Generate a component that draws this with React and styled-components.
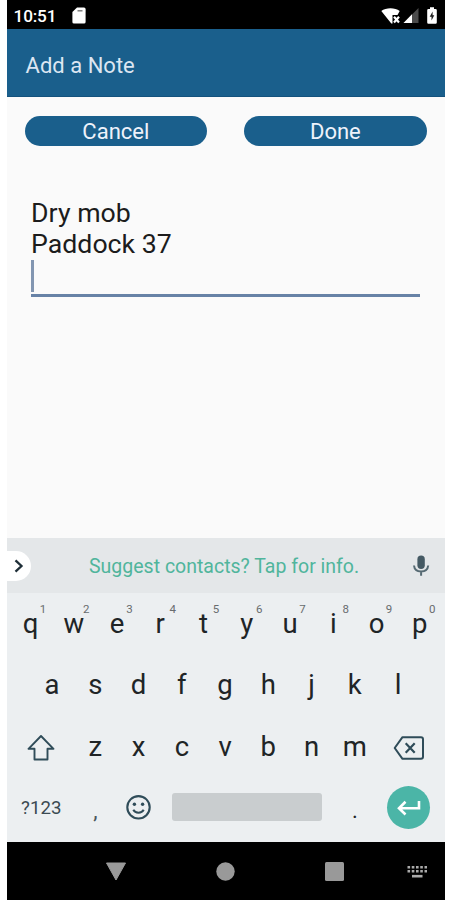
import React from 'react';
import styled, { createGlobalStyle } from 'styled-components';

const topRow = 'qwertyuiop'.split('');
const middleRow = 'asdfghjkl'.split('');
const bottomRow = 'zxcvbnm'.split('');

const App = () => {
  return (
    <>
      <GlobalStyle />
      <Phone>
        <StatusBar>
          <Clock>10:51</Clock>
          <SdCardIcon />
          <StatusIcons>
            <WifiIcon />
            <SignalIcon />
            <BatteryIcon />
          </StatusIcons>
        </StatusBar>
        <TitleBar>Add a Note</TitleBar>
        <Content>
          <Actions>
            <ActionButton>Cancel</ActionButton>
            <ActionButton>Done</ActionButton>
          </Actions>
          <NoteField>
            <NoteLine>Dry mob</NoteLine>
            <NoteLine>Paddock 37</NoteLine>
            <Caret />
          </NoteField>
        </Content>
        <Keyboard>
          <SuggestionBar>
            <ExpandButton><ChevronIcon /></ExpandButton>
            <Suggestion>Suggest contacts? Tap for info.</Suggestion>
            <MicIcon />
          </SuggestionBar>
          <KeyRow>
            {topRow.map((letter, i) => (
              <Key key={letter}>
                {letter}
                <Hint>{(i + 1) % 10}</Hint>
              </Key>
            ))}
          </KeyRow>
          <KeyRow>
            {middleRow.map((letter) => <Key key={letter}>{letter}</Key>)}
          </KeyRow>
          <KeyRow>
            <IconKey><ShiftIcon /></IconKey>
            {bottomRow.map((letter) => <Key key={letter}>{letter}</Key>)}
            <IconKey><DeleteIcon /></IconKey>
          </KeyRow>
          <KeyRow>
            <WideKey>?123</WideKey>
            <PunctuationKey $color="#4b575d">,</PunctuationKey>
            <Key><SmileyIcon /></Key>
            <SpaceSlot><SpaceBar /></SpaceSlot>
            <PunctuationKey $color="#202426">.</PunctuationKey>
            <WideKey><EnterKey><EnterIcon /></EnterKey></WideKey>
          </KeyRow>
        </Keyboard>
        <NavBar>
          <NavSlot />
          <NavSlot><BackIcon /></NavSlot>
          <NavSlot><HomeIcon /></NavSlot>
          <NavSlot><RecentsIcon /></NavSlot>
          <NavSlot><KeyboardIcon /></NavSlot>
        </NavBar>
      </Phone>
    </>
  )
}

export default App;

const SdCardIcon = () => (
  <svg width="14" height="17" viewBox="0 0 14 17">
    <path d="M5 0.5H12a1.6 1.6 0 0 1 1.6 1.6V15a1.6 1.6 0 0 1-1.6 1.6H2A1.6 1.6 0 0 1 0.4 15V5z" fill="#fff" />
    <path d="M5.5 3.8h5" stroke="#777" strokeWidth="1.4" />
  </svg>
)

const WifiIcon = () => (
  <svg width="19" height="16" viewBox="0 0 19 16">
    <path d="M0.3 3C5-0.8 14-0.8 18.7 3L16.5 7H11.5V15.5H10.3z" fill="#fff" />
    <path d="M13 8.8l5 5.7M18 8.8l-5 5.7" stroke="#fff" strokeWidth="2.2" />
  </svg>
)

const SignalIcon = () => (
  <svg width="16" height="15" viewBox="0 0 16 15">
    <path d="M15.5 0V15H0.5z" fill="#4b4b4b" />
    <path d="M9 6.3V15H0.5z" fill="#fff" />
  </svg>
)

const BatteryIcon = () => (
  <svg width="10" height="17" viewBox="0 0 10 17">
    <path d="M3 0.3h4V2h1.5a1.3 1.3 0 0 1 1.3 1.3V15.5a1.2 1.2 0 0 1-1.2 1.2H1.4A1.2 1.2 0 0 1 0.2 15.5V3.3A1.3 1.3 0 0 1 1.5 2H3z" fill="#fff" />
    <path d="M5.6 4.5L2.7 9.7h1.8v3.8L7.3 8.3H5.6z" fill="#222" />
  </svg>
)

const ChevronIcon = () => (
  <svg width="10" height="14" viewBox="0 0 10 14" fill="none">
    <path d="M1.5 1.3L7.5 7l-6 5.7" stroke="#1f2f38" strokeWidth="2.3" />
  </svg>
)

const MicIcon = () => (
  <svg width="18" height="22" viewBox="0 0 18 22" fill="none">
    <rect x="5.4" y="0.6" width="7.4" height="13.4" rx="3.7" fill="#455a64" />
    <path d="M2 10.5c0.4 4 3.3 6 7.1 6s6.7-2 7.1-6M9.1 16.5v4.3" stroke="#566a73" strokeWidth="2" />
  </svg>
)

const ShiftIcon = () => (
  <svg width="28" height="26" viewBox="0 0 28 26" fill="none">
    <path d="M14 1L1.5 13.8H7.5V24.5H20.5V13.8H26.5z" stroke="#2f4c59" strokeWidth="1.9" strokeLinejoin="round" />
  </svg>
)

const DeleteIcon = () => (
  <svg width="31" height="24" viewBox="0 0 31 24" fill="none">
    <path d="M9.5 1.2H28a2 2 0 0 1 2 2V20.8a2 2 0 0 1-2 2H9.5L1.7 12z" stroke="#2f4c59" strokeWidth="2" strokeLinejoin="round" />
    <path d="M12.7 7.3l9 9.4M21.7 7.3l-9 9.4" stroke="#2f4c59" strokeWidth="2.2" />
  </svg>
)

const SmileyIcon = () => (
  <svg width="26" height="26" viewBox="0 0 26 26" fill="none">
    <circle cx="12.5" cy="12.3" r="11.2" stroke="#2f4c59" strokeWidth="2.1" />
    <circle cx="8.4" cy="9.3" r="1.7" fill="#2f4c59" />
    <circle cx="16.6" cy="9.3" r="1.7" fill="#2f4c59" />
    <path d="M7.3 14.8c2 3.9 8.4 3.9 10.4 0" stroke="#2f4c59" strokeWidth="2" />
  </svg>
)

const EnterIcon = () => (
  <svg width="24" height="16" viewBox="0 0 24 16" fill="none">
    <path d="M22 1V8.2H2.5M8.5 1.8L2 8.2l6.5 6.3" stroke="#fff" strokeWidth="2.6" />
  </svg>
)

const BackIcon = () => (
  <svg width="22" height="19" viewBox="0 0 22 19">
    <path d="M1.5 1H20.5L11 18z" fill="#999" stroke="#999" strokeLinejoin="round" />
  </svg>
)

const HomeIcon = () => (
  <svg width="19" height="19" viewBox="0 0 19 19">
    <circle cx="9.5" cy="9.5" r="9.2" fill="#999" />
  </svg>
)

const RecentsIcon = () => (
  <svg width="19" height="19" viewBox="0 0 19 19">
    <rect width="19" height="19" rx="1.5" fill="#999" />
  </svg>
)

const KeyboardIcon = () => (
  <svg width="20" height="13" viewBox="0 0 20 13" fill="none" stroke="#aaa">
    <path d="M0.5 2.2H20M0.5 6.3H20" strokeWidth="2.6" strokeDasharray="2.6 1.65" />
    <path d="M5 11.2H15.5" strokeWidth="2.6" />
  </svg>
)

const GlobalStyle = createGlobalStyle`
  body {
    margin: 0;
    background: #fff;
    font-family: Roboto, sans-serif;
  }

  svg {
    display: block;
    flex: none;
  }
`;

const Phone = styled.div`
  width: 438px;
  height: 900px;
  margin-left: 6.6px;
  display: flex;
  flex-direction: column;
  overflow: hidden;
`;

const StatusBar = styled.div`
  height: 29px;
  box-sizing: border-box;
  display: flex;
  align-items: center;
  padding: 2px 8px 0 7px;
  background: #000;
`;

const Clock = styled.div`
  width: 58.5px;
  color: #fff;
  font-size: 17.2px;
  font-weight: 500;
  letter-spacing: -0.2px;
`;

const StatusIcons = styled.div`
  margin-left: auto;
  display: flex;
  align-items: center;
  gap: 3px;

  & > :last-child {
    margin-left: 5px;
  }
`;

const TitleBar = styled.div`
  height: 68px;
  box-sizing: border-box;
  padding: 5px 0 0 19px;
  display: flex;
  align-items: center;
  background: #1a5f8c;
  border-bottom: 1px solid #14527d;
  color: #dce6f2;
  font-size: 22px;
`;

const Content = styled.div`
  height: 441px;
  box-sizing: border-box;
  padding: 19px 18px 0;
  background: #fafafa;
`;

const Actions = styled.div`
  display: flex;
  justify-content: space-between;
`;

const ActionButton = styled.button`
  width: 182.5px;
  height: 29.5px;
  padding: 1px 0 0;
  border: 0;
  border-radius: 15px;
  background: #1a5f8c;
  color: #eef2fb;
  font: 400 22px Roboto, sans-serif;
`;

const NoteField = styled.div`
  margin: 52px 7px 0 6px;
  border-bottom: 3px solid #6782a6;
  color: #1c1c1c;
`;

const NoteLine = styled.div`
  height: 31px;
  padding-left: 0.5px;
  line-height: 31px;
  font-size: 26.7px;
`;

const Caret = styled.div`
  width: 3px;
  height: 32px;
  margin-bottom: 2px;
  background: #8296b1;
`;

const Keyboard = styled.div`
  height: 304px;
  background: #eceff1;
`;

const SuggestionBar = styled.div`
  height: 55px;
  display: flex;
  align-items: center;
  background: #e4e7e9;
`;

const ExpandButton = styled.div`
  width: 24px;
  height: 30px;
  box-sizing: border-box;
  display: flex;
  align-items: center;
  padding-left: 7px;
  border-radius: 0 15px 15px 0;
  background: #fff;
`;

const Suggestion = styled.div`
  width: 381px;
  box-sizing: border-box;
  padding: 2px 0 0 6px;
  color: #50b59c;
  font-size: 19.5px;
  text-align: center;
`;

const KeyRow = styled.div`
  height: 61.3px;
  display: flex;
  justify-content: center;
  padding-right: 1px;
`;

const Key = styled.div`
  position: relative;
  width: 43.25px;
  display: flex;
  align-items: center;
  justify-content: center;
  color: #202426;
  font-size: 27.5px;
`;

const WideKey = styled(Key)`
  width: 65px;
  color: #3b4a52;
  font-size: 18.7px;
`;

const IconKey = styled(WideKey)`
  box-sizing: border-box;
  padding-top: 3px;
`;

const PunctuationKey = styled(Key)`
  box-sizing: border-box;
  padding-top: 6px;
  color: ${(props) => props.$color};
  font-size: 22px;
`;

const Hint = styled.span`
  position: absolute;
  top: 9px;
  left: 31px;
  color: #686c6e;
  font-size: 11.5px;
`;

const SpaceSlot = styled.div`
  width: 173px;
  display: flex;
  align-items: center;
  justify-content: center;
`;

const SpaceBar = styled.div`
  width: 150px;
  height: 28px;
  margin-bottom: 1px;
  border-radius: 3px;
  background: #c9cdcf;
`;

const EnterKey = styled.div`
  width: 43px;
  height: 43px;
  display: flex;
  align-items: center;
  justify-content: center;
  border-radius: 50%;
  background: #4bb5a7;
`;

const NavBar = styled.div`
  height: 58px;
  display: flex;
  align-items: center;
  background: #000;
`;

const NavSlot = styled.div`
  width: 109.5px;
  display: flex;
  justify-content: center;

  &:first-child,
  &:last-child {
    width: 55px;
  }
`;
